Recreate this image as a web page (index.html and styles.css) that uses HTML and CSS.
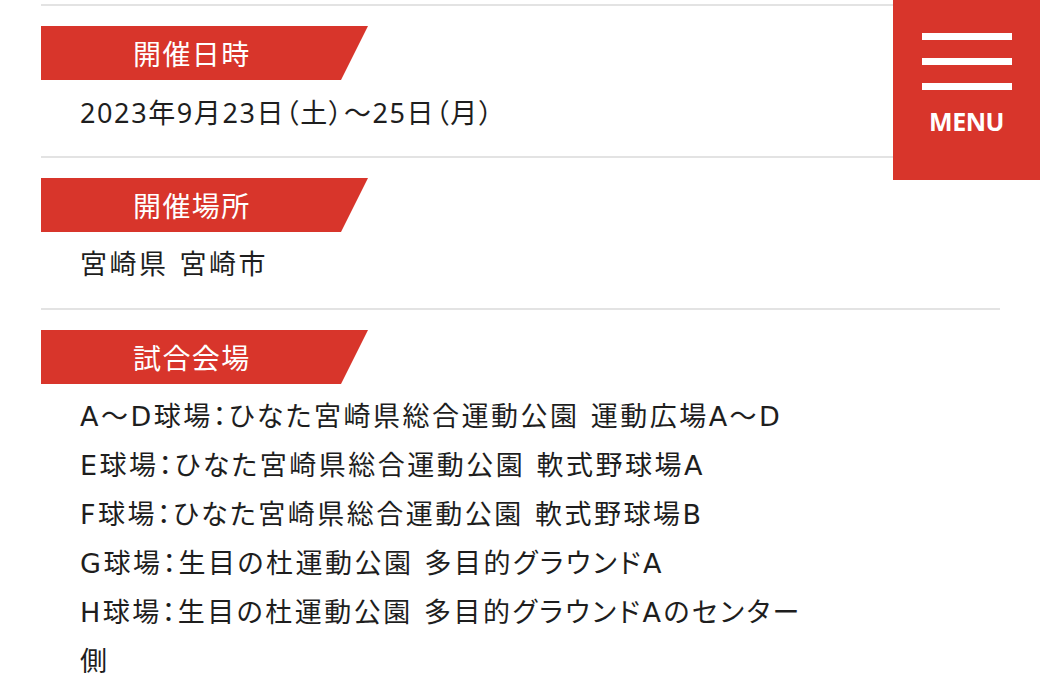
FILE: index.html
```html
<!DOCTYPE html>
<html lang="ja">
<head>
<meta charset="utf-8">
<title>大会概要</title>
<link rel="stylesheet" href="styles.css">
</head>
<body>
<main class="outline">
  <div class="top-rule"></div>
  <section class="item">
    <h2 class="tag">開催日時</h2>
    <p class="body body-date">2023年9月23日（土）～25日（月）</p>
  </section>
  <section class="item">
    <h2 class="tag">開催場所</h2>
    <p class="body">宮崎県 宮崎市</p>
  </section>
  <section class="item item-last">
    <h2 class="tag">試合会場</h2>
    <p class="body">A～D球場：ひなた宮崎県総合運動公園 運動広場A～D<br>E球場：ひなた宮崎県総合運動公園 軟式野球場A<br>F球場：ひなた宮崎県総合運動公園 軟式野球場B<br>G球場：生目の杜運動公園 多目的グラウンドA<br>H球場：生目の杜運動公園 多目的グラウンドAのセンター側</p>
  </section>
</main>
<button class="menu-btn" type="button">
  <span class="bar"></span>
  <span class="bar"></span>
  <span class="bar"></span>
  <span class="menu-label">MENU</span>
</button>
</body>
</html>
```
FILE: styles.css
```css
html, body {
  margin: 0;
  padding: 0;
  background: #fff;
}
body {
  font-family: "Noto Sans", "Noto Sans CJK JP", sans-serif;
  color: #1e1e1e;
}
.outline {
  margin-left: 41px;
  width: 959px;
}
.top-rule {
  height: 4px;
  border-bottom: 2px solid #e3e3e3;
}
.item {
  padding: 20px 0 19px;
  border-bottom: 2px solid #e3e3e3;
}
.item-last {
  border-bottom: none;
}
.tag {
  margin: 0;
  width: 327px;
  height: 54px;
  box-sizing: border-box;
  padding-left: 92px;
  background: #d8352b;
  color: #fff;
  font-family: "Noto Sans CJK JP", sans-serif;
  font-size: 28px;
  font-weight: 400;
  line-height: 54px;
  clip-path: polygon(0 0, 100% 0, calc(100% - 27px) 100%, 0 100%);
  font-feature-settings: "palt";
  letter-spacing: 0.05em;
}
.body {
  margin: 8px 0 0;
  padding-left: 39px;
  max-width: 735px;
  font-family: "DejaVu Sans", "Noto Sans CJK JP", sans-serif;
  font-size: 27px;
  line-height: 49px;
  font-feature-settings: "palt";
  letter-spacing: 2.5px;
}
.body-date {
  font-family: "Noto Sans", "Noto Sans CJK JP", sans-serif;
  letter-spacing: 1.6px;
}
.menu-btn {
  position: fixed;
  top: 0;
  right: 0;
  width: 147px;
  height: 180px;
  margin: 0;
  padding: 33px 0 0;
  border: none;
  background: #d8352b;
  display: flex;
  flex-direction: column;
  align-items: center;
  box-sizing: border-box;
  cursor: pointer;
}
.bar {
  display: block;
  width: 90px;
  height: 7px;
  background: #fff;
  margin-bottom: 18px;
}
.menu-label {
  margin-top: -2px;
  color: #fff;
  font-family: "Open Sans", "Noto Sans", sans-serif;
  font-weight: 700;
  font-size: 25px;
  line-height: 30px;
  letter-spacing: -0.5px;
}
```
